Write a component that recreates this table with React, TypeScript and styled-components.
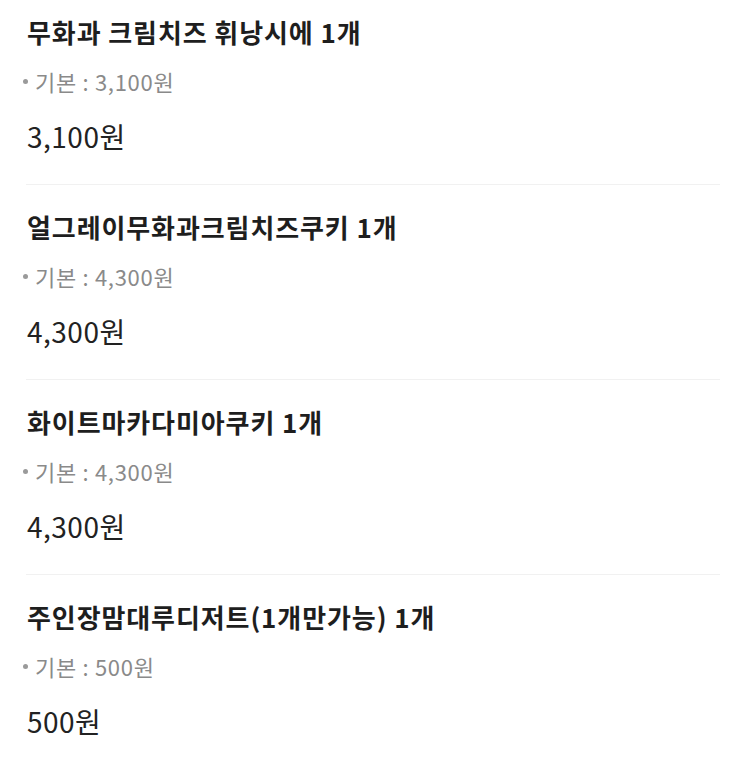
import React from "react";
import styled, {createGlobalStyle} from "styled-components";

const GlobalStyle = createGlobalStyle`
  body {
    margin: 0;
    background: #ffffff;
    font-family: "Noto Sans CJK KR", "Noto Sans", sans-serif;
  }
`;

const orderItems = [
    {name: "무화과 크림치즈 휘낭시에 1개", base: "3,100원", price: "3,100원"},
    {name: "얼그레이무화과크림치즈쿠키 1개", base: "4,300원", price: "4,300원"},
    {name: "화이트마카다미아쿠키 1개", base: "4,300원", price: "4,300원"},
    {name: "주인장맘대루디저트(1개만가능) 1개", base: "500원", price: "500원"},
];

const App = () => {
    return (
        <>
            <GlobalStyle/>
            <ItemList>
                {orderItems.map((item, i) => (
                    <Item key={i}>
                        <ItemName>{item.name}</ItemName>
                        <OptionLine>
                            <Bullet/>
                            기본 : {item.base}
                        </OptionLine>
                        <Price>{item.price}</Price>
                    </Item>
                ))}
            </ItemList>
        </>
    );
};

const ItemList = styled.ul`
  list-style: none;
  margin: 0;
  padding: 0 23px 0 26px;
`;

const Item = styled.li`
  display: flex;
  flex-direction: column;
  align-items: flex-start;
  padding: 25px 0 31px 1px;
  border-top: 1px solid #f1f1f1;

  &:first-child {
    padding-top: 15px;
    border-top: none;
  }
`;

const ItemName = styled.div`
  font-size: 26px;
  line-height: 34px;
  font-weight: 700;
  letter-spacing: 0.9px;
  color: #1e1e1e;
`;

const OptionLine = styled.div`
  display: flex;
  align-items: center;
  margin-top: 18px;
  margin-left: -4px;
  font-size: 22px;
  line-height: 28px;
  letter-spacing: 0.7px;
  color: #8a8a8a;
`;

const Bullet = styled.span`
  width: 5px;
  height: 5px;
  border-radius: 50%;
  background: #9a9a9a;
  margin-right: 7px;
`;

const Price = styled.div`
  margin-top: 24px;
  font-size: 28px;
  line-height: 34px;
  letter-spacing: 0.5px;
  color: #222222;
`;

export default App;
